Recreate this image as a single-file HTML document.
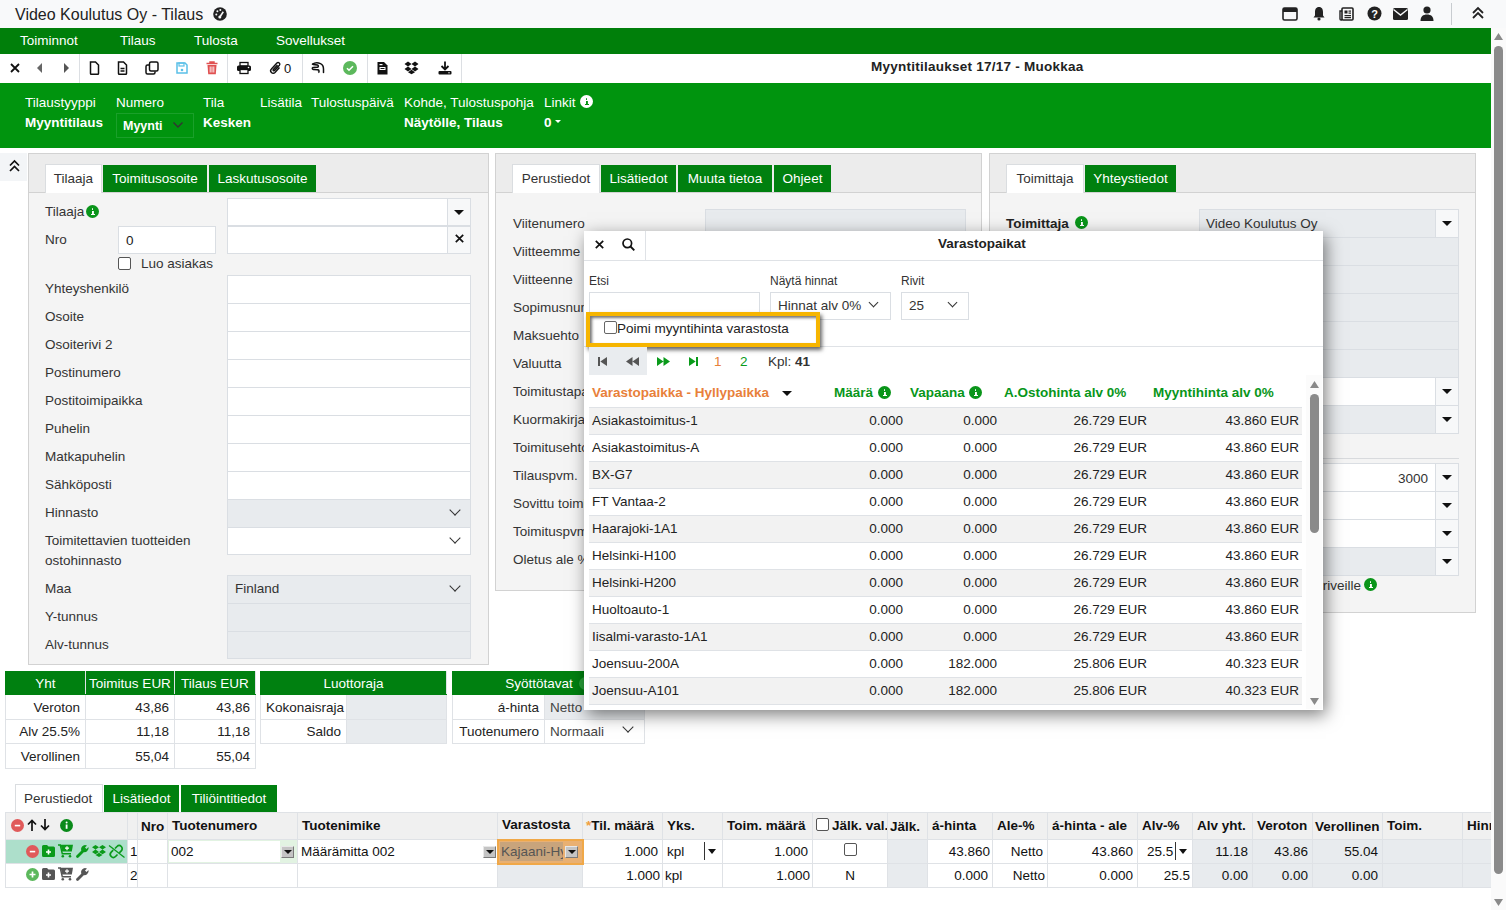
<!DOCTYPE html>
<html><head><meta charset="utf-8">
<style>
*{box-sizing:border-box;margin:0;padding:0}
html,body{width:1506px;height:910px;overflow:hidden;background:#fff;font-family:"Liberation Sans",sans-serif;font-size:13.5px;color:#212529}
.a{position:absolute}
.t{position:absolute;white-space:nowrap;line-height:1}
svg{position:absolute;overflow:visible}
.vd{position:absolute;width:1px;background:#dcdfe3}
.panel{position:absolute;background:#f4f4f4;border:1px solid #d2d2d2}
.ptop{position:absolute;left:0;top:0;right:0;height:39px;background:#ececec;border-bottom:1px solid #d2d2d2}
.tab{position:absolute;top:10px;height:27px;background:#00800f;color:#fff;font-size:13.5px;line-height:27px;text-align:center;white-space:nowrap}
.tab.on{background:#fff;color:#333;border:1px solid #dadde0;border-bottom:none;top:10px;height:29px;line-height:28px}
.l{position:absolute;white-space:nowrap;font-size:13.5px;color:#333;line-height:1;margin-top:1px}
.inp{position:absolute;background:#fff;border:1px solid #dadee3}
.dis{background:#e8ebee}
.ib{position:absolute;right:0;top:0;bottom:0;width:23px;border-left:1px solid #dadee3;background:#f7f8f9}
.caret{position:absolute;width:0;height:0;border-left:5px solid transparent;border-right:5px solid transparent;border-top:5px solid #111}
.chev{position:absolute;width:8px;height:8px;border-right:1.6px solid #333;border-bottom:1.6px solid #333;transform:rotate(45deg)}
.info{position:absolute;width:13px;height:13px;border-radius:50%;background:#0a951a;color:#fff;font-size:0}
.info:before{content:"";position:absolute;left:5.6px;top:2.8px;width:1.9px;height:1.9px;background:currentColor;border-radius:1px}
.info:after{content:"";position:absolute;left:4.5px;top:5.6px;width:4px;height:4.6px;background:linear-gradient(currentColor,currentColor) 1.1px 0/1.9px 100% no-repeat,linear-gradient(currentColor,currentColor) 0 100%/4px 1.2px no-repeat}
</style></head><body>
<!-- title bar -->
<div class="a" style="left:0;top:0;width:1506px;height:28px;background:#f8f9fa"></div>
<div class="t" style="left:15px;top:7px;font-size:16px;color:#222">Video Koulutus Oy - Tilaus</div>
<svg style="left:213px;top:7px" width="14" height="14" viewBox="0 0 14 14"><circle cx="7" cy="7" r="6.8" fill="#222"/><circle cx="3.3" cy="7.5" r="1" fill="#f8f9fa"/><circle cx="4.4" cy="4.2" r="1" fill="#f8f9fa"/><circle cx="7.3" cy="3" r="1" fill="#f8f9fa"/><path d="M6.5 10.5L10.3 4.8" stroke="#f8f9fa" stroke-width="1.6"/><circle cx="6.8" cy="10" r="1.5" fill="#f8f9fa"/></svg>
<!-- top right icons -->
<svg style="left:1282px;top:7px" width="16" height="14" viewBox="0 0 16 14"><rect x="1" y="1" width="14" height="12" rx="1.5" fill="none" stroke="#222" stroke-width="1.6"/><rect x="1" y="1" width="14" height="4" fill="#222"/></svg>
<svg style="left:1312px;top:6px" width="14" height="15" viewBox="0 0 14 15"><path d="M7 1C4 1 3 3.5 3 6v3.5L1.5 11.5h11L11 9.5V6C11 3.5 10 1 7 1z" fill="#222"/><circle cx="7" cy="13" r="1.6" fill="#222"/></svg>
<svg style="left:1339px;top:7px" width="15" height="14" viewBox="0 0 15 14"><rect x="3" y="1" width="11" height="12" rx="1" fill="none" stroke="#222" stroke-width="1.6"/><path d="M3 4H1v8a1 1 0 0 0 2 0" fill="none" stroke="#222" stroke-width="1.4"/><rect x="5.5" y="3.5" width="3" height="3" fill="#222"/><rect x="9.5" y="3.5" width="2.5" height="1.2" fill="#222"/><rect x="9.5" y="5.5" width="2.5" height="1.2" fill="#222"/><rect x="5.5" y="8" width="6.5" height="1.2" fill="#222"/><rect x="5.5" y="10" width="6.5" height="1.2" fill="#222"/></svg>
<svg style="left:1367px;top:6px" width="15" height="15" viewBox="0 0 15 15"><circle cx="7.5" cy="7.5" r="7" fill="#222"/><text x="7.5" y="11.5" font-family="Liberation Sans" font-weight="bold" font-size="11" fill="#fff" text-anchor="middle">?</text></svg>
<svg style="left:1393px;top:8px" width="15" height="12" viewBox="0 0 15 12"><rect x="0" y="0" width="15" height="12" rx="1.5" fill="#222"/><path d="M0.5 1.5L7.5 7l7-5.5" fill="none" stroke="#f8f9fa" stroke-width="1.4"/></svg>
<svg style="left:1420px;top:6px" width="14" height="15" viewBox="0 0 14 15"><circle cx="7" cy="4" r="3.6" fill="#222"/><path d="M0.5 15c0-4.5 2.5-6.5 6.5-6.5s6.5 2 6.5 6.5z" fill="#222"/></svg>
<div class="vd" style="left:1451px;top:3px;height:22px;background:#c8ccd0"></div>
<svg style="left:1471px;top:6px" width="14" height="14" viewBox="0 0 14 14"><path d="M2 7L7 2l5 5M2 12l5-5 5 5" fill="none" stroke="#222" stroke-width="1.8"/></svg>

<!-- menu -->
<div class="a" style="left:0;top:28px;width:1491px;height:26px;background:#007f0a"></div>
<div class="t" style="left:20px;top:34px;color:#fff">Toiminnot</div>
<div class="t" style="left:120px;top:34px;color:#fff">Tilaus</div>
<div class="t" style="left:194px;top:34px;color:#fff">Tulosta</div>
<div class="t" style="left:276px;top:34px;color:#fff">Sovellukset</div>

<!-- toolbar -->
<div class="vd" style="left:79px;top:54px;height:29px"></div>
<div class="vd" style="left:227px;top:54px;height:29px"></div>
<div class="vd" style="left:302px;top:54px;height:29px"></div>
<div class="vd" style="left:367px;top:54px;height:29px"></div>
<div class="vd" style="left:461px;top:54px;height:29px"></div>
<svg style="left:10px;top:63px" width="10" height="10" viewBox="0 0 10 10"><path d="M1 1l8 8M9 1l-8 8" stroke="#111" stroke-width="1.8"/></svg>
<svg style="left:37px;top:63px" width="6" height="10" viewBox="0 0 6 10"><path d="M5 0v10L0 5z" fill="#666"/></svg>
<svg style="left:64px;top:63px" width="6" height="10" viewBox="0 0 6 10"><path d="M0 0v10l5-5z" fill="#555"/></svg>
<svg style="left:89px;top:61px" width="11" height="14" viewBox="0 0 11 14"><path d="M1.5 1h5l3 3v8.5a.8.8 0 0 1-.8.8H2.3a.8.8 0 0 1-.8-.8z" fill="none" stroke="#111" stroke-width="1.5"/></svg>
<svg style="left:117px;top:61px" width="11" height="14" viewBox="0 0 11 14"><path d="M1.5 1h5l3 3v8.5a.8.8 0 0 1-.8.8H2.3a.8.8 0 0 1-.8-.8z" fill="none" stroke="#111" stroke-width="1.5"/><path d="M3.5 7.5h4M3.5 10h4" stroke="#111" stroke-width="1.3"/></svg>
<svg style="left:145px;top:61px" width="14" height="14" viewBox="0 0 14 14"><rect x="4.5" y="1" width="8.5" height="9" rx="1.5" fill="none" stroke="#111" stroke-width="1.5"/><path d="M4 4H2.5a1.5 1.5 0 0 0-1.5 1.5v6A1.5 1.5 0 0 0 2.5 13h6a1.5 1.5 0 0 0 1.5-1.5V10.5" fill="none" stroke="#111" stroke-width="1.5"/></svg>
<svg style="left:176px;top:62px" width="12" height="12" viewBox="0 0 12 12"><path d="M1 1h8l2 2v8H1z" fill="none" stroke="#5bc0e8" stroke-width="1.5"/><rect x="3" y="1" width="5" height="3" fill="none" stroke="#5bc0e8" stroke-width="1.2"/><circle cx="6" cy="8" r="1.3" fill="#5bc0e8"/></svg>
<svg style="left:206px;top:61px" width="12" height="14" viewBox="0 0 12 14"><path d="M0.5 2.5h11M4 2.5V1h4v1.5" stroke="#e05050" stroke-width="1.5" fill="none"/><path d="M1.5 4h9l-.7 9.3H2.2z" fill="#e05050"/><path d="M4.2 5.5v6M6 5.5v6M7.8 5.5v6" stroke="#fff" stroke-width="0.9"/></svg>
<svg style="left:237px;top:62px" width="14" height="12" viewBox="0 0 14 12"><rect x="3" y="0.5" width="8" height="3.5" fill="none" stroke="#111" stroke-width="1.3"/><rect x="0" y="3.5" width="14" height="5.5" rx="1.5" fill="#111"/><rect x="3" y="7.5" width="8" height="4" fill="#fff" stroke="#111" stroke-width="1.3"/><circle cx="11.5" cy="5.5" r=".8" fill="#fff"/></svg>
<svg style="left:270px;top:61px" width="12" height="14" viewBox="0 0 12 14"><path d="M9.5 6.5L5 11.5a2.5 2.5 0 0 1-3.6-3.5l5.5-6a1.7 1.7 0 0 1 2.5 2.3L4.5 9.6a.8.8 0 0 1-1.2-1.1L7.5 4" fill="none" stroke="#111" stroke-width="1.4"/></svg>
<div class="t" style="left:284px;top:62px;font-size:13px;color:#111">0</div>
<svg style="left:311px;top:62px" width="14" height="12" viewBox="0 0 14 12"><path d="M1.5 2.2C3.5 0.8 7 0.6 9.5 1.6c2 .9 3 3 3 5.5v3.5" fill="none" stroke="#111" stroke-width="1.5" stroke-linecap="round"/><path d="M1.5 2.2l5 .8c1.2.3 1.2 2-.1 2.2L2 5.5c-1 .3-1 1.8.2 2l4.8.3c1.2.2 1.5 2.2.3 2.7" fill="#ccc" stroke="#111" stroke-width="1.5" stroke-linejoin="round"/></svg>
<svg style="left:343px;top:61px" width="14" height="14" viewBox="0 0 14 14"><circle cx="7" cy="7" r="7" fill="#5cb85c"/><path d="M4 7.2l2 2 4-4" fill="none" stroke="#fff" stroke-width="1.6"/></svg>
<svg style="left:377px;top:61px" width="11" height="14" viewBox="0 0 11 14"><path d="M0.5 1h6.5l3.5 3.5v9H.5z" fill="#111"/><rect x="2.5" y="6" width="6" height="3" fill="#fff"/><rect x="2.5" y="3" width="3" height="1.2" fill="#fff"/><rect x="3.5" y="7" width="4" height="1" fill="#111"/></svg>
<svg style="left:404px;top:61px" width="15" height="13" viewBox="0 0 15 13"><path d="M4 0.5L0.5 3l3.5 2.5L7.5 3zM11 0.5L7.5 3 11 5.5 14.5 3zM4 5.5L0.5 8 4 10.5 7.5 8zM11 5.5L7.5 8 11 10.5 14.5 8zM4 11.2l3.5 2 3.5-2-3.5-2.5z" fill="#111"/></svg>
<svg style="left:438px;top:61px" width="14" height="14" viewBox="0 0 14 14"><path d="M7 0.5v8M3.5 5L7 8.5 10.5 5" fill="none" stroke="#111" stroke-width="1.8"/><rect x="0.5" y="10" width="13" height="3.5" rx="1" fill="#111"/><circle cx="11" cy="11.8" r=".7" fill="#fff"/></svg>
<div class="t" style="left:871px;top:60px;font-weight:bold;color:#222;letter-spacing:0.25px">Myyntitilaukset 17/17 - Muokkaa</div>

<!-- header -->
<div class="a" style="left:0;top:83px;width:1491px;height:65px;background:#00940e"></div>
<div class="t" style="left:25px;top:96px;color:#fff">Tilaustyyppi</div>
<div class="t" style="left:116px;top:96px;color:#fff">Numero</div>
<div class="t" style="left:203px;top:96px;color:#fff">Tila</div>
<div class="t" style="left:260px;top:96px;color:#fff">Lisätila</div>
<div class="t" style="left:311px;top:96px;color:#fff">Tulostuspäivä</div>
<div class="t" style="left:404px;top:96px;color:#fff">Kohde, Tulostuspohja</div>
<div class="t" style="left:544px;top:96px;color:#fff">Linkit</div>
<div class="info" style="left:580px;top:95px;background:#fff;color:#00940e">i</div>
<div class="t" style="left:25px;top:116px;color:#fff;font-weight:bold">Myyntitilaus</div>
<div class="a" style="left:116px;top:113px;width:78px;height:25px;border:1px solid #1aa02a"></div>
<div class="t" style="left:123px;top:120px;color:#fff;font-weight:bold;font-size:12.5px">Myynti</div>
<svg style="left:173px;top:122px" width="10" height="6" viewBox="0 0 10 6"><path d="M0.5 0.5L5 5l4.5-4.5" fill="none" stroke="#333" stroke-width="1.4"/></svg>
<div class="t" style="left:203px;top:116px;color:#fff;font-weight:bold">Kesken</div>
<div class="t" style="left:404px;top:116px;color:#fff;font-weight:bold">Näytölle, Tilaus</div>
<div class="t" style="left:544px;top:116px;color:#fff;font-weight:bold">0</div>
<svg style="left:555px;top:120px" width="6" height="4" viewBox="0 0 6 4"><path d="M0 0h6L3 3z" fill="#fff"/></svg>
<!-- collapse btn -->
<div class="a" style="left:0;top:153px;width:27px;height:28px;background:#f3f5f7"></div>
<svg style="left:9px;top:160px" width="11" height="12" viewBox="0 0 11 12"><path d="M1 5.5L5.5 1 10 5.5M1 11l4.5-4.5L10 11" fill="none" stroke="#111" stroke-width="1.7"/></svg>
<!-- left panel -->
<div class="panel" style="left:28px;top:153px;width:461px;height:512px"><div class="ptop"></div></div>
<div class="tab on" style="left:45px;width:57px;top:164px">Tilaaja</div>
<div class="tab" style="left:103px;width:104px;top:165px">Toimitusosoite</div>
<div class="tab" style="left:209px;width:107px;top:165px">Laskutusosoite</div>
<div class="l" style="left:45px;top:204px">Tilaaja</div>
<div class="info" style="left:86px;top:205px">i</div>
<div class="inp" style="left:227px;top:198px;width:244px;height:28px"><div class="ib"></div></div>
<div class="caret" style="left:454px;top:210px"></div>
<div class="l" style="left:45px;top:232px">Nro</div>
<div class="inp" style="left:118px;top:226px;width:98px;height:28px"></div>
<div class="l" style="left:126px;top:233px;color:#222">0</div>
<div class="inp" style="left:227px;top:226px;width:244px;height:28px"><div class="ib"></div></div>
<svg style="left:455px;top:234px" width="9" height="9" viewBox="0 0 9 9"><path d="M.8.8l7.4 7.4M8.2.8L.8 8.2" stroke="#111" stroke-width="1.7"/></svg>
<div class="a" style="left:118px;top:257px;width:13px;height:13px;border:1px solid #555;border-radius:2px;background:#fff"></div>
<div class="l" style="left:141px;top:256px">Luo asiakas</div>
<div class="l" style="left:45px;top:281px">Yhteyshenkilö</div>
<div class="l" style="left:45px;top:309px">Osoite</div>
<div class="l" style="left:45px;top:337px">Osoiterivi 2</div>
<div class="l" style="left:45px;top:365px">Postinumero</div>
<div class="l" style="left:45px;top:393px">Postitoimipaikka</div>
<div class="l" style="left:45px;top:421px">Puhelin</div>
<div class="l" style="left:45px;top:449px">Matkapuhelin</div>
<div class="l" style="left:45px;top:477px">Sähköposti</div>
<div class="l" style="left:45px;top:505px">Hinnasto</div>
<div class="l" style="left:45px;top:533px">Toimitettavien tuotteiden</div>
<div class="l" style="left:45px;top:553px">ostohinnasto</div>
<div class="l" style="left:45px;top:581px">Maa</div>
<div class="l" style="left:45px;top:609px">Y-tunnus</div>
<div class="l" style="left:45px;top:637px">Alv-tunnus</div>
<div class="inp" style="left:227px;top:275px;width:244px;height:29px"></div>
<div class="inp" style="left:227px;top:303px;width:244px;height:29px"></div>
<div class="inp" style="left:227px;top:331px;width:244px;height:29px"></div>
<div class="inp" style="left:227px;top:359px;width:244px;height:29px"></div>
<div class="inp" style="left:227px;top:387px;width:244px;height:29px"></div>
<div class="inp" style="left:227px;top:415px;width:244px;height:29px"></div>
<div class="inp" style="left:227px;top:443px;width:244px;height:29px"></div>
<div class="inp" style="left:227px;top:471px;width:244px;height:29px"></div>
<div class="inp dis" style="left:227px;top:499px;width:244px;height:29px"></div>
<div class="chev" style="left:451px;top:506px"></div>
<div class="inp" style="left:227px;top:527px;width:244px;height:28px"></div>
<div class="chev" style="left:451px;top:534px"></div>
<div class="inp dis" style="left:227px;top:575px;width:244px;height:29px"></div>
<div class="l" style="left:235px;top:581px">Finland</div>
<div class="chev" style="left:451px;top:582px"></div>
<div class="inp dis" style="left:227px;top:603px;width:244px;height:29px"></div>
<div class="inp dis" style="left:227px;top:631px;width:244px;height:28px"></div>

<!-- middle panel -->
<div class="panel" style="left:495px;top:153px;width:487px;height:438px"><div class="ptop"></div></div>
<div class="tab on" style="left:512px;width:88px;top:164px">Perustiedot</div>
<div class="tab" style="left:601px;width:75px;top:165px">Lisätiedot</div>
<div class="tab" style="left:678px;width:94px;top:165px">Muuta tietoa</div>
<div class="tab" style="left:774px;width:57px;top:165px">Ohjeet</div>
<div class="l" style="left:513px;top:216px">Viitenumero</div>
<div class="l" style="left:513px;top:244px">Viitteemme</div>
<div class="l" style="left:513px;top:272px">Viitteenne</div>
<div class="l" style="left:513px;top:300px">Sopimusnumero</div>
<div class="l" style="left:513px;top:328px">Maksuehto</div>
<div class="l" style="left:513px;top:356px">Valuutta</div>
<div class="l" style="left:513px;top:384px">Toimitustapa</div>
<div class="l" style="left:513px;top:412px">Kuormakirja</div>
<div class="l" style="left:513px;top:440px">Toimitusehto</div>
<div class="l" style="left:513px;top:468px">Tilauspvm.</div>
<div class="l" style="left:513px;top:496px">Sovittu toimitus</div>
<div class="l" style="left:513px;top:524px">Toimituspvm</div>
<div class="l" style="left:513px;top:552px">Oletus ale %</div>
<div class="inp dis" style="left:705px;top:209px;width:261px;height:29px"></div>

<!-- right panel -->
<div class="panel" style="left:989px;top:153px;width:487px;height:460px"><div class="ptop"></div></div>
<div class="tab on" style="left:1006px;width:78px;top:164px">Toimittaja</div>
<div class="tab" style="left:1085px;width:91px;top:165px">Yhteystiedot</div>
<div class="l" style="left:1006px;top:216px;font-weight:bold;color:#222">Toimittaja</div>
<div class="info" style="left:1075px;top:216px">i</div>
<div class="inp dis" style="left:1199px;top:209px;width:260px;height:29px"><div class="ib"></div></div>
<div class="l" style="left:1206px;top:216px">Video Koulutus Oy</div>
<div class="caret" style="left:1442px;top:221px"></div>
<div class="inp dis" style="left:1199px;top:237px;width:260px;height:29px"></div>
<div class="inp dis" style="left:1199px;top:265px;width:260px;height:29px"></div>
<div class="inp dis" style="left:1199px;top:293px;width:260px;height:29px"></div>
<div class="inp dis" style="left:1199px;top:321px;width:260px;height:29px"></div>
<div class="inp dis" style="left:1199px;top:349px;width:260px;height:29px"></div>
<div class="inp" style="left:1199px;top:377px;width:260px;height:29px"><div class="ib"></div></div>
<div class="caret" style="left:1442px;top:389px"></div>
<div class="inp dis" style="left:1199px;top:405px;width:260px;height:29px"><div class="ib"></div></div>
<div class="caret" style="left:1442px;top:417px"></div>
<div class="a" style="left:1003px;top:458px;width:456px;height:1px;background:#d8dadd"></div>
<div class="inp" style="left:1199px;top:463px;width:260px;height:29px"><div class="ib"></div></div>
<div class="l" style="left:1398px;top:471px">3000</div>
<div class="caret" style="left:1442px;top:475px"></div>
<div class="inp" style="left:1199px;top:491px;width:260px;height:29px"><div class="ib"></div></div>
<div class="caret" style="left:1442px;top:503px"></div>
<div class="inp" style="left:1199px;top:519px;width:260px;height:29px"><div class="ib"></div></div>
<div class="caret" style="left:1442px;top:531px"></div>
<div class="inp dis" style="left:1199px;top:547px;width:260px;height:29px"><div class="ib"></div></div>
<div class="caret" style="left:1442px;top:559px"></div>
<div class="l" style="right:145px;top:578px">Myyntiriveille</div>
<div class="info" style="left:1364px;top:578px">i</div>
<style>
.tb{position:absolute;border-collapse:collapse;table-layout:fixed;font-size:13.5px}
.tb td{border:1px solid #dfe2e6;padding:0 5px;white-space:nowrap;overflow:hidden;color:#222}
.tb th{background:#008010;color:#fff;font-weight:normal;border:1px solid #008010;border-right-color:#dfe2e6;white-space:nowrap;overflow:hidden;padding:0}
.r{text-align:right}
.g{background:#e8ebee}
.grid{position:absolute;left:5px;top:812px;border-collapse:collapse;table-layout:fixed;font-size:13.5px}
.grid td{border:1px solid #dfe2e6;white-space:nowrap;overflow:hidden;padding:0 4px;color:#111;position:relative}
.grid tr.h td{background:#f0f0f0;font-weight:bold;height:27px;color:#111;padding-bottom:2px}
</style>
<table class="tb" style="left:5px;top:671px;width:250px">
<colgroup><col style="width:80px"><col style="width:89px"><col style="width:81px"></colgroup>
<tr style="height:23px"><th>Yht</th><th>Toimitus EUR</th><th>Tilaus EUR</th></tr>
<tr style="height:25px"><td class="r">Veroton</td><td class="r">43,86</td><td class="r">43,86</td></tr>
<tr style="height:24px"><td class="r">Alv 25.5%</td><td class="r">11,18</td><td class="r">11,18</td></tr>
<tr style="height:25px"><td class="r">Verollinen</td><td class="r">55,04</td><td class="r">55,04</td></tr>
</table>
<table class="tb" style="left:260px;top:671px;width:186px">
<colgroup><col style="width:86px"><col style="width:100px"></colgroup>
<tr style="height:23px"><th colspan="2">Luottoraja</th></tr>
<tr style="height:25px"><td class="r">Kokonaisraja</td><td class="g"></td></tr>
<tr style="height:24px"><td class="r">Saldo</td><td class="g"></td></tr>
</table>
<table class="tb" style="left:452px;top:671px;width:192px">
<colgroup><col style="width:92px"><col style="width:100px"></colgroup>
<tr style="height:23px"><th colspan="2">Syöttötavat<span style="display:inline-block;width:13px;height:13px;border-radius:50%;background:#2aa03a;margin-left:6px;vertical-align:-2px"></span></th></tr>
<tr style="height:25px"><td class="r">á-hinta</td><td class="g" style="color:#444">Netto</td></tr>
<tr style="height:24px"><td class="r">Tuotenumero</td><td style="color:#444">Normaali</td></tr>
</table>
<div class="chev" style="left:624px;top:723px"></div>

<!-- bottom tabs -->
<div class="a" style="left:15px;top:784px;width:88px;height:29px;background:#fff;border:1px solid #dadde0;border-bottom:none"></div>
<div class="t" style="left:24px;top:792px;color:#333">Perustiedot</div>
<div class="tab" style="left:104px;top:785px;width:75px;height:27px;line-height:27px">Lisätiedot</div>
<div class="tab" style="left:181px;top:785px;width:96px;height:27px;line-height:27px">Tiliöintitiedot</div>

<!-- grid -->
<table class="grid" style="width:1486px">
<colgroup>
<col style="width:122px"><col style="width:10px"><col style="width:30px"><col style="width:130px"><col style="width:200px"><col style="width:85px"><col style="width:80px"><col style="width:60px"><col style="width:90px"><col style="width:75px"><col style="width:40px"><col style="width:65px"><col style="width:55px"><col style="width:90px"><col style="width:55px"><col style="width:60px"><col style="width:60px"><col style="width:70px"><col style="width:80px"><col style="width:29px">
</colgroup>
<tr class="h">
<td></td><td></td><td style="padding:0 3px">Nro</td><td>Tuotenumero</td><td>Tuotenimike</td><td>Varastosta</td><td style="padding-left:3px"><span style="color:#f0a040">*</span>Til. määrä</td><td>Yks.</td><td>Toim. määrä</td><td style="padding-left:19px">Jälk. val.</td><td style="padding:0 2px">Jälk.</td><td>á-hinta</td><td>Ale-%</td><td>á-hinta - ale</td><td>Alv-%</td><td>Alv yht.</td><td>Veroton</td><td style="padding:0 2px">Verollinen</td><td>Toim.</td><td>Hinn</td>
</tr>
<tr style="height:24px">
<td style="background:#addfcb"></td><td style="padding:0 2px">1</td><td></td><td style="background:#e2f3e2"></td><td></td><td style="background:#e9b072;border:2px solid #f0a848"></td><td class="r">1.000</td><td>kpl</td><td class="r">1.000</td><td></td><td class="g"></td><td class="r" style="padding-right:2px">43.860</td><td class="r">Netto</td><td class="r">43.860</td><td></td><td class="r g">11.18</td><td class="r g">43.86</td><td class="r g">55.04</td><td class="g"></td><td class="g"></td>
</tr>
<tr style="height:24px">
<td></td><td style="padding:0 2px">2</td><td></td><td></td><td></td><td class="g"></td><td class="r" style="padding-right:2px">1.000</td><td style="padding:0 2px">kpl</td><td class="r" style="padding-right:2px">1.000</td><td style="text-align:center">N</td><td class="g"></td><td class="r">0.000</td><td class="r" style="padding-right:2px">Netto</td><td class="r">0.000</td><td class="r" style="padding-right:2px">25.5</td><td class="r g">0.00</td><td class="r g">0.00</td><td class="r g">0.00</td><td class="g"></td><td class="g"></td>
</tr>
</table>
<style>
.ddb{position:absolute;width:13px;height:12px;background:#c4c4c4;border:1px solid;border-color:#e8e8e8 #7a7a7a #7a7a7a #e8e8e8}
.ddb:after{content:"";position:absolute;left:2px;top:3px;border-left:4px solid transparent;border-right:4px solid transparent;border-top:4px solid #111}
</style>
<!-- header icons -->
<svg style="left:11px;top:819px" width="13" height="13" viewBox="0 0 13 13"><circle cx="6.5" cy="6.5" r="6.5" fill="#e05a5a"/><rect x="3.8" y="5.8" width="5.4" height="1.6" fill="#fff"/></svg>
<svg style="left:27px;top:819px" width="10" height="12" viewBox="0 0 10 12"><path d="M5 12V1.5M1 5.5L5 1.5l4 4" fill="none" stroke="#111" stroke-width="1.7"/></svg>
<svg style="left:40px;top:819px" width="10" height="12" viewBox="0 0 10 12"><path d="M5 0v10.5M1 6.5l4 4 4-4" fill="none" stroke="#111" stroke-width="1.7"/></svg>
<svg style="left:60px;top:819px" width="13" height="13" viewBox="0 0 13 13"><circle cx="6.5" cy="6.5" r="6.5" fill="#0a8a1a"/><rect x="5.7" y="5.5" width="1.8" height="4.3" fill="#fff"/><circle cx="6.6" cy="3.6" r="1" fill="#fff"/></svg>
<!-- row1 icons -->
<div class="a" style="left:6px;top:840px;width:121px;height:23px;background:#addfcb"></div>
<svg style="left:26px;top:845px" width="13" height="13" viewBox="0 0 13 13"><circle cx="6.5" cy="6.5" r="6.5" fill="#e05a5a"/><rect x="3.8" y="5.8" width="5.4" height="1.6" fill="#fff"/></svg>
<svg style="left:42px;top:845px" width="13" height="12" viewBox="0 0 13 12"><path d="M0 1.5A1.5 1.5 0 0 1 1.5 0h3.5l1.5 1.5h5A1.5 1.5 0 0 1 13 3v7.5A1.5 1.5 0 0 1 11.5 12h-10A1.5 1.5 0 0 1 0 10.5z" fill="#0a9a1a"/><path d="M6.5 4.5v5M4 7h5" stroke="#fff" stroke-width="1.6"/></svg>
<svg style="left:58px;top:844px" width="15" height="14" viewBox="0 0 15 14"><path d="M0 1h2.3l2 8.8H13" fill="none" stroke="#0a9a1a" stroke-width="1.5"/><path d="M2.6 0.8H15L13.8 7.6H4.2z" fill="#0a9a1a"/><path d="M9 2.2v4M7 4.2h4" stroke="#fff" stroke-width="1.2"/><circle cx="4.8" cy="12.3" r="1.3" fill="#0a9a1a"/><circle cx="12" cy="12.3" r="1.3" fill="#0a9a1a"/></svg>
<svg style="left:76px;top:844px" width="13" height="14" viewBox="0 0 13 14"><path d="M1.5 12.5L7 7" stroke="#0a9a1a" stroke-width="2.8" stroke-linecap="round"/><path d="M6 7.5a4 4 0 0 1 5-6L9 3.5l1.5 1.5 2-2a4 4 0 0 1-6 4.5z" fill="#0a9a1a"/></svg>
<svg style="left:92px;top:845px" width="14" height="12" viewBox="0 0 14 12"><path d="M3.5 0L0 2.3l3.5 2.3L7 2.3zM10.5 0L7 2.3l3.5 2.3L14 2.3zM3.5 4.6L0 6.9l3.5 2.3L7 6.9zM10.5 4.6L7 6.9l3.5 2.3L14 6.9zM3.5 10l3.5 2 3.5-2L7 7.7z" fill="#0a9a1a"/></svg>
<svg style="left:108px;top:845px" width="17" height="13" viewBox="0 0 17 13"><path d="M7 3.5l2-2a3 3 0 0 1 4.3 4.3l-2 2M9.5 9.5l-2 2A3 3 0 0 1 3.2 7.2l2-2" fill="none" stroke="#0a9a1a" stroke-width="1.7"/><path d="M1 0.5L16.5 12.5" stroke="#0a9a1a" stroke-width="1.3"/></svg>
<!-- row2 icons -->
<svg style="left:26px;top:868px" width="13" height="13" viewBox="0 0 13 13"><circle cx="6.5" cy="6.5" r="6.5" fill="#5cb85c"/><path d="M6.5 3.5v6M3.5 6.5h6" stroke="#fff" stroke-width="1.7"/></svg>
<svg style="left:42px;top:868px" width="13" height="12" viewBox="0 0 13 12"><path d="M0 1.5A1.5 1.5 0 0 1 1.5 0h3.5l1.5 1.5h5A1.5 1.5 0 0 1 13 3v7.5A1.5 1.5 0 0 1 11.5 12h-10A1.5 1.5 0 0 1 0 10.5z" fill="#555"/><path d="M6.5 4.5v5M4 7h5" stroke="#fff" stroke-width="1.6"/></svg>
<svg style="left:58px;top:867px" width="15" height="14" viewBox="0 0 15 14"><path d="M0 1h2.3l2 8.8H13" fill="none" stroke="#555" stroke-width="1.5"/><path d="M2.6 0.8H15L13.8 7.6H4.2z" fill="#555"/><path d="M9 2.2v4M7 4.2h4" stroke="#fff" stroke-width="1.2"/><circle cx="4.8" cy="12.3" r="1.3" fill="#555"/><circle cx="12" cy="12.3" r="1.3" fill="#555"/></svg>
<svg style="left:76px;top:867px" width="13" height="14" viewBox="0 0 13 14"><path d="M1.5 12.5L7 7" stroke="#555" stroke-width="2.8" stroke-linecap="round"/><path d="M6 7.5a4 4 0 0 1 5-6L9 3.5l1.5 1.5 2-2a4 4 0 0 1-6 4.5z" fill="#555"/></svg>
<!-- row1 inputs -->
<div class="a" style="left:169px;top:841px;width:111px;height:21px;background:#fff"></div>
<div class="t" style="left:171px;top:845px;color:#111">002</div>
<div class="ddb" style="left:281px;top:846px"></div>
<div class="t" style="left:301px;top:845px;color:#111">Määrämitta 002</div>
<div class="ddb" style="left:483px;top:846px"></div>
<div class="a" style="left:500px;top:842px;width:63px;height:19px;background:#c8a47c"></div>
<div class="t" style="left:501px;top:845px;color:#555;width:62px;overflow:hidden">Kajaani-Hyllypaikka</div>
<div class="ddb" style="left:565px;top:846px"></div>
<div class="a" style="left:704px;top:842px;width:1px;height:18px;background:#333"></div>
<div class="caret" style="left:708px;top:849px;border-width:5px 4.5px 0 4.5px"></div>
<div class="a" style="left:844px;top:843px;width:13px;height:13px;border:1px solid #555;border-radius:2px;background:#fff"></div>
<div class="a" style="left:816px;top:818px;width:13px;height:13px;border:1px solid #555;border-radius:2px;background:#fff"></div>
<div class="t" style="left:1147px;top:845px;color:#111">25.5</div>
<div class="a" style="left:1175px;top:842px;width:1px;height:18px;background:#333"></div>
<div class="caret" style="left:1179px;top:849px;border-width:5px 4.5px 0 4.5px"></div>
<!-- modal -->
<div class="a" style="left:584px;top:231px;width:739px;height:479px;background:#fff;box-shadow:3px 5px 16px rgba(0,0,0,.5)"></div>
<div class="a" style="left:584px;top:260px;width:739px;height:1px;background:#dfe2e6"></div>
<div class="vd" style="left:645px;top:231px;height:29px;background:#dfe2e6"></div>
<svg style="left:595px;top:240px" width="9" height="9" viewBox="0 0 9 9"><path d="M.8.8l7.4 7.4M8.2.8L.8 8.2" stroke="#111" stroke-width="1.7"/></svg>
<svg style="left:622px;top:238px" width="13" height="13" viewBox="0 0 13 13"><circle cx="5.3" cy="5.3" r="4.3" fill="none" stroke="#111" stroke-width="1.7"/><path d="M8.5 8.5l3.8 3.8" stroke="#111" stroke-width="1.9"/></svg>
<div class="t" style="left:938px;top:237px;font-weight:bold;color:#222">Varastopaikat</div>
<div class="t" style="left:589px;top:275px;font-size:12px;color:#333">Etsi</div>
<div class="t" style="left:770px;top:275px;font-size:12px;color:#333">Näytä hinnat</div>
<div class="t" style="left:901px;top:275px;font-size:12px;color:#333">Rivit</div>
<div class="inp" style="left:589px;top:292px;width:171px;height:28px"></div>
<div class="inp" style="left:770px;top:292px;width:121px;height:28px"></div>
<div class="t" style="left:778px;top:299px;color:#333">Hinnat alv 0%</div>
<div class="chev" style="left:870px;top:299px;width:7px;height:7px"></div>
<div class="inp" style="left:901px;top:292px;width:68px;height:28px"></div>
<div class="t" style="left:909px;top:299px;color:#333">25</div>
<div class="chev" style="left:949px;top:299px;width:7px;height:7px"></div>
<div class="a" style="left:584px;top:346px;width:739px;height:1px;background:#dfe2e6"></div>
<div class="a" style="left:586px;top:312px;width:234px;height:35px;border:4px solid #f6b500;background:#fff;box-shadow:2px 3px 4px rgba(0,0,0,.6),inset 2px 2px 3px rgba(0,0,0,.55)"></div>
<div class="a" style="left:604px;top:321px;width:13px;height:13px;border:1px solid #666;border-radius:2px;background:#fff"></div>
<div class="t" style="left:617px;top:322px;color:#222">Poimi myyntihinta varastosta</div>
<!-- pagination -->
<div class="a" style="left:589px;top:347px;width:58px;height:28px;background:#e9ecef"></div>
<svg style="left:598px;top:357px" width="9" height="9" viewBox="0 0 9 9"><rect x="0" y="0" width="2" height="9" fill="#555"/><path d="M9 0v9L2.3 4.5z" fill="#555"/></svg>
<svg style="left:626px;top:357px" width="13" height="9" viewBox="0 0 13 9"><path d="M6.5 0v9L0 4.5zM13 0v9L6.5 4.5z" fill="#555"/></svg>
<svg style="left:657px;top:357px" width="13" height="9" viewBox="0 0 13 9"><path d="M0 0v9l6.5-4.5zM6.5 0v9L13 4.5z" fill="#0a9a1a"/></svg>
<svg style="left:689px;top:357px" width="9" height="9" viewBox="0 0 9 9"><path d="M0 0v9l6.7-4.5z" fill="#0a9a1a"/><rect x="7" y="0" width="2" height="9" fill="#0a9a1a"/></svg>
<div class="t" style="left:714px;top:355px;color:#e8803a">1</div>
<div class="t" style="left:740px;top:355px;color:#0a9a1a">2</div>
<div class="t" style="left:768px;top:355px;color:#333">Kpl: <b>41</b></div>
<!-- table -->
<style>
.mt{position:absolute;left:589px;top:407px;width:713px;border-collapse:collapse;table-layout:fixed;font-size:13.5px}
.mt td{height:27px;border-top:1px solid #dfe2e6;white-space:nowrap;padding:0 3px 2px;color:#222}
.mt tr:nth-child(odd) td{background:#f2f2f2}
.mt td.r{text-align:right}
.mh{position:absolute;top:386px;font-weight:bold;color:#08961a;white-space:nowrap;line-height:1}
</style>
<div class="mh" style="left:592px;color:#e8803a">Varastopaikka - Hyllypaikka</div>
<div class="caret" style="left:782px;top:391px"></div>
<div class="mh" style="left:834px">Määrä</div><div class="info" style="left:878px;top:386px">i</div>
<div class="mh" style="left:910px">Vapaana</div><div class="info" style="left:969px;top:386px">i</div>
<div class="mh" style="left:1004px">A.Ostohinta alv 0%</div>
<div class="mh" style="left:1153px">Myyntihinta alv 0%</div>
<table class="mt">
<colgroup><col style="width:240px"><col style="width:77px"><col style="width:94px"><col style="width:150px"><col style="width:152px"></colgroup>
<tr><td>Asiakastoimitus-1</td><td class="r">0.000</td><td class="r">0.000</td><td class="r">26.729 EUR</td><td class="r">43.860 EUR</td></tr>
<tr><td>Asiakastoimitus-A</td><td class="r">0.000</td><td class="r">0.000</td><td class="r">26.729 EUR</td><td class="r">43.860 EUR</td></tr>
<tr><td>BX-G7</td><td class="r">0.000</td><td class="r">0.000</td><td class="r">26.729 EUR</td><td class="r">43.860 EUR</td></tr>
<tr><td>FT Vantaa-2</td><td class="r">0.000</td><td class="r">0.000</td><td class="r">26.729 EUR</td><td class="r">43.860 EUR</td></tr>
<tr><td>Haarajoki-1A1</td><td class="r">0.000</td><td class="r">0.000</td><td class="r">26.729 EUR</td><td class="r">43.860 EUR</td></tr>
<tr><td>Helsinki-H100</td><td class="r">0.000</td><td class="r">0.000</td><td class="r">26.729 EUR</td><td class="r">43.860 EUR</td></tr>
<tr><td>Helsinki-H200</td><td class="r">0.000</td><td class="r">0.000</td><td class="r">26.729 EUR</td><td class="r">43.860 EUR</td></tr>
<tr><td>Huoltoauto-1</td><td class="r">0.000</td><td class="r">0.000</td><td class="r">26.729 EUR</td><td class="r">43.860 EUR</td></tr>
<tr><td>Iisalmi-varasto-1A1</td><td class="r">0.000</td><td class="r">0.000</td><td class="r">26.729 EUR</td><td class="r">43.860 EUR</td></tr>
<tr><td>Joensuu-200A</td><td class="r">0.000</td><td class="r">182.000</td><td class="r">25.806 EUR</td><td class="r">40.323 EUR</td></tr>
<tr><td>Joensuu-A101</td><td class="r">0.000</td><td class="r">182.000</td><td class="r">25.806 EUR</td><td class="r">40.323 EUR</td></tr>
</table>
<div class="a" style="left:589px;top:704px;width:713px;height:1px;background:#dfe2e6"></div>
<!-- modal scrollbar -->
<div class="a" style="left:1306px;top:375px;width:16px;height:334px;background:#fbfbfb"></div>
<svg style="left:1310px;top:381px" width="9" height="7" viewBox="0 0 9 7"><path d="M4.5 0L9 7H0z" fill="#8a8a8a"/></svg>
<div class="a" style="left:1310px;top:394px;width:9px;height:139px;border-radius:5px;background:#8a8a8a"></div>
<svg style="left:1310px;top:698px" width="9" height="7" viewBox="0 0 9 7"><path d="M0 0h9L4.5 7z" fill="#8a8a8a"/></svg>

<!-- page scrollbar -->
<div class="a" style="left:1491px;top:28px;width:15px;height:882px;background:#fafafa"></div>
<svg style="left:1494px;top:33px" width="9" height="7" viewBox="0 0 9 7"><path d="M4.5 0L9 7H0z" fill="#8a8a8a"/></svg>
<div class="a" style="left:1494px;top:46px;width:9px;height:828px;border-radius:5px;background:#8a8a8a"></div>
<svg style="left:1494px;top:899px" width="9" height="7" viewBox="0 0 9 7"><path d="M0 0h9L4.5 7z" fill="#8a8a8a"/></svg>
</body></html>
